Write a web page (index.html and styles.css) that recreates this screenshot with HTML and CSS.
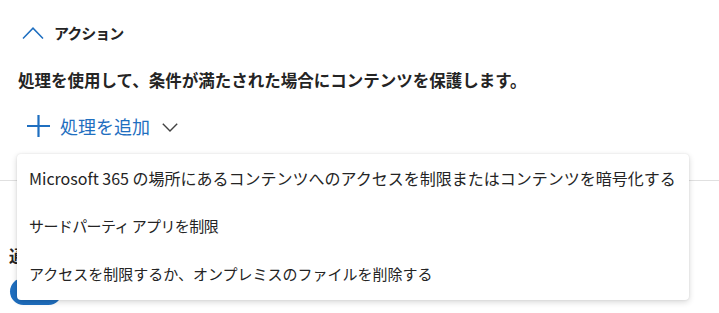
FILE: index.html
```html
<!DOCTYPE html>
<html lang="ja">
<head>
<meta charset="utf-8">
<link rel="stylesheet" href="styles.css">
</head>
<body>
<div class="page">
  <section class="actions">
    <div class="header">
      <svg class="chev-up" width="22" height="12" viewBox="0 0 22 12"><path d="M1 11.5 L11 1.2 L21 11.5" fill="none" stroke="#1f6fc0" stroke-width="1.5"/></svg>
      <span class="title">アクション</span>
    </div>
    <p class="desc">処理を使用して、条件が満たされた場合にコンテンツを保護します。</p>
    <div class="add">
      <svg class="plus" width="23" height="22" viewBox="0 0 23 22"><path d="M11.5 0 V22 M0 11 H23" fill="none" stroke="#1f6fc0" stroke-width="2.2"/></svg>
      <span class="add-label">処理を追加</span>
      <svg class="chev-down" width="16" height="9" viewBox="0 0 16 9"><path d="M0.8 0.8 L8 8 L15.2 0.8" fill="none" stroke="#424242" stroke-width="1.4"/></svg>
    </div>
  </section>
  <hr class="divider">
  <section class="lower">
    <h3 class="lower-title">通知</h3>
    <span class="toggle"></span>
  </section>
  <div class="menu">
    <div class="item item-wide">Microsoft 365 の場所にあるコンテンツへのアクセスを制限またはコンテンツを暗号化する</div>
    <div class="item item-tight">サードパーティ アプリを制限</div>
    <div class="item">アクセスを制限するか、オンプレミスのファイルを削除する</div>
  </div>
</div>
</body>
</html>
```
FILE: styles.css
```css
html, body {
  margin: 0;
  padding: 0;
  background: #ffffff;
}
body {
  font-family: "Noto Sans CJK JP", "Noto Sans", sans-serif;
  color: #242424;
  width: 719px;
  height: 313px;
  overflow: hidden;
}
.page {
  position: relative;
  height: 313px;
}
.actions {
  padding-left: 18px;
  padding-top: 22px;
}
.header {
  display: flex;
  align-items: center;
  height: 22px;
}
.chev-up {
  margin-left: 4px;
  margin-right: 10px;
}
.title {
  font-size: 15px;
  font-weight: 700;
  letter-spacing: -1px;
  line-height: 22px;
  color: #242424;
}
.desc {
  margin: 24px 0 0 0;
  font-size: 16.5px;
  font-weight: 700;
  line-height: 24px;
  color: #242424;
}
.add {
  display: flex;
  align-items: center;
  height: 24px;
  margin-top: 22px;
}
.plus {
  margin-left: 9px;
  margin-right: 10px;
}
.add-label {
  font-size: 18px;
  line-height: 24px;
  color: #1f6fc0;
}
.chev-down {
  margin-left: 12px;
  margin-top: 2px;
}
.divider {
  margin: 42px 0 0 0;
  border: 0;
  border-top: 1px solid #e0e0e0;
  height: 0;
}
.lower {
  padding-left: 9px;
}
.lower-title {
  margin: 62px 0 0 0;
  font-size: 16px;
  font-weight: 700;
  line-height: 24px;
}
.toggle {
  display: block;
  margin-top: 11px;
  margin-left: 1px;
  width: 52px;
  height: 27px;
  border-radius: 14px;
  background: #1f6fc0;
}
.menu {
  position: absolute;
  left: 17px;
  top: 154px;
  width: 672px;
  padding-bottom: 2px;
  background: #ffffff;
  border-radius: 4px;
  box-shadow: 0 2px 6px rgba(0, 0, 0, 0.16), 0 0 2px rgba(0, 0, 0, 0.1);
}
.item {
  height: 48px;
  line-height: 48px;
  padding-left: 12px;
  font-size: 15px;
  color: #242424;
  white-space: nowrap;
}
.item-wide {
  font-size: 16px;
}
.item-tight {
  letter-spacing: -0.6px;
}
```
